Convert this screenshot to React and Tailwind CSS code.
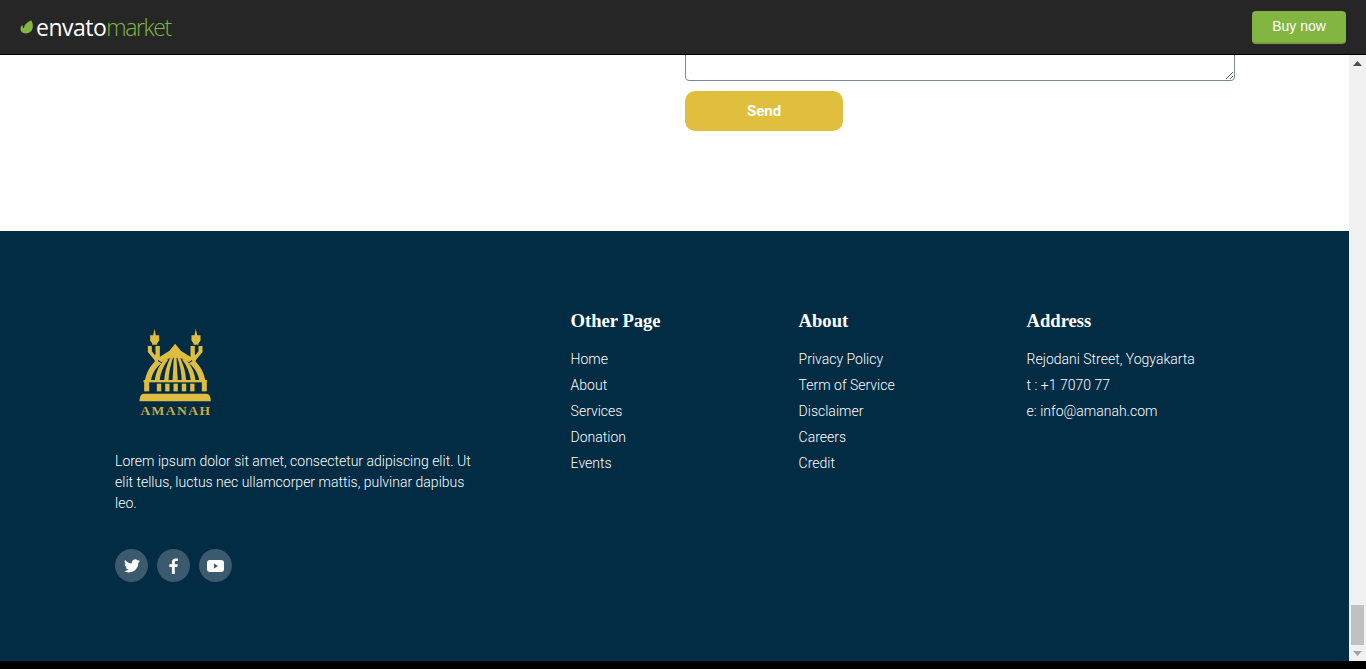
import React from "react";

function Mosque() {
  const c = "#dfbd40";
  return (
    <svg width="73" height="74" viewBox="88 38 216 222" className="block">
      <g fill={c}>
        {/* left minaret */}
        <path d="M133 40 L137 60 L147 60 L147 76 L141 84 L141 88 L126 88 L126 84 L120 76 L120 60 L129 60 Z" />
        <path d="M113 92 L125 92 L125 108 L133 118 L136 118 L136 92 L149 92 L149 130 L138 142 L128 128 L113 110 Z" />
        {/* right minaret */}
        <path d="M257 40 L261 60 L271 60 L271 76 L265 84 L265 88 L250 88 L250 84 L244 76 L244 60 L253 60 Z" />
        <path d="M277 92 L265 92 L265 108 L257 118 L254 118 L254 92 L241 92 L241 130 L252 142 L262 128 L277 110 Z" />
        {/* roof */}
        <path d="M195 85 L212 106 L250 130 L236 141 C224 131 210 127 195 127 C180 127 166 131 154 141 L140 130 L178 106 Z" />
        {/* outer dome */}
        <path d="M138 134 C120 152 108 172 104 197 L122 197 C126 174 138 156 154 144 Z" />
        <path d="M252 134 C270 152 282 172 286 197 L268 197 C264 174 252 156 236 144 Z" />
        {/* ribs */}
        <path d="M164 132 C146 150 136 172 134 197 L148 197 C151 172 160 150 175 132 Z" />
        <path d="M226 132 C244 150 254 172 256 197 L242 197 C239 172 230 150 215 132 Z" />
        <path d="M180 128 C170 148 163 172 162 197 L175 197 C176 172 181 150 188 128 Z" />
        <path d="M210 128 C220 148 227 172 228 197 L215 197 C214 172 209 150 202 128 Z" />
        <path d="M191 126 L199 126 L203 197 L187 197 Z" />
        {/* drum */}
        <rect x="100" y="194" width="190" height="7" />
        <rect x="102" y="194" width="15" height="34" />
        <rect x="275" y="194" width="15" height="34" />
        <rect x="140" y="205" width="13" height="23" />
        <rect x="165" y="205" width="13" height="23" />
        <rect x="190" y="205" width="13" height="23" />
        <rect x="215" y="205" width="13" height="23" />
        <rect x="240" y="205" width="13" height="23" />
        {/* base */}
        <path d="M100 235 L290 235 C298 235 302 246 302 258 L88 258 C88 246 92 235 100 235 Z" />
      </g>
    </svg>
  );
}

function Leaf() {
  return (
    <svg width="14" height="14" viewBox="0 0 14 14" className="block">
      <path d="M11.500 0.500 C13.500 4.500 13.500 9 10.500 11.800 C8 14 3.500 14.200 1.500 11.800 C-0.300 9.500 0.300 6.500 2.600 5 C2.500 6.500 3 7.800 3.800 8.400 C4 5 7 1.800 11.500 0.500 Z" fill="#82b541" />
    </svg>
  );
}

function Twitter() {
  return (
    <svg width="16" height="14" viewBox="0 0 24 20" fill="#fff">
      <path d="M24 2.400c-.9.400-1.800.7-2.800.8 1-.6 1.800-1.600 2.200-2.700-1 .6-2 1-3.100 1.200A4.900 4.900 0 0 0 11.900 6.200C7.800 6 4.200 4 1.700.9a4.900 4.900 0 0 0 1.500 6.600c-.8 0-1.600-.2-2.200-.6v.1c0 2.400 1.700 4.400 3.900 4.800-.7.200-1.500.2-2.200.1.600 2 2.400 3.400 4.600 3.400A9.900 9.900 0 0 1 0 17.400 13.900 13.900 0 0 0 7.500 19.600c9.100 0 14-7.500 14-14v-.6c1-.7 1.800-1.600 2.500-2.600z" />
    </svg>
  );
}

function Facebook() {
  return (
    <svg width="9" height="16" viewBox="0 0 9 16" fill="#fff">
      <path d="M5.800 16V9h2.500L8.700 6.200H5.800V4.500c0-.8.300-1.400 1.400-1.400h1.600V.6C8.500.5 7.600.4 6.600.4 4.400.4 2.900 1.700 2.900 4.200v2H.3V9h2.600v7z" />
    </svg>
  );
}

function Youtube() {
  return (
    <svg width="17" height="12" viewBox="0 0 17 12">
      <rect x="0" y="0" width="17" height="12" rx="3" fill="#fff" />
      <path d="M7 3.500 L11 6 L7 8.500 Z" fill="#3c5a6e" />
    </svg>
  );
}

function Column({ title, items }) {
  return (
    <div className="w-[228px] shrink-0">
      <h4 className="text-[18.6px] leading-[25px] font-bold text-white mb-[13px] font-['Liberation_Serif',serif]">{title}</h4>
      <ul className="flex flex-col">
        {items.map((t) => (
          <li key={t} className="text-[14px] leading-[26px] font-light text-white">{t}</li>
        ))}
      </ul>
    </div>
  );
}

function Social({ children }) {
  return (
    <div className="w-[33px] h-[33px] rounded-full bg-[#3c5a6e] flex items-center justify-center">{children}</div>
  );
}

export default function App() {
  return (
    <div className="w-[1366px] h-[669px] overflow-hidden flex flex-col bg-black font-['Roboto',sans-serif]">
      <header className="h-[55px] shrink-0 bg-[#262626] border-b border-black flex items-center justify-between pl-[20px] pr-[20px]">
        <div className="flex items-center">
          <Leaf />
          <span className="ml-[2px] text-[23px] leading-none tracking-[-0.5px] text-white font-['Open_Sans',sans-serif] font-normal">envato</span>
          <span className="text-[23px] leading-none tracking-[-1.4px] text-[#82b541] font-['Open_Sans',sans-serif] font-light">market</span>
        </div>
        <div className="w-[94px] h-[33px] rounded-[4px] bg-[#82b541] border-b-2 border-[#75a33a] flex items-center justify-center text-[14px] text-white font-['Liberation_Sans',sans-serif]">
          Buy now
        </div>
      </header>

      <div className="h-[606px] flex shrink-0">
        <main className="flex-1 flex flex-col min-w-0">
          <section className="h-[176px] shrink-0 bg-white overflow-hidden pl-[685px]">
            <textarea
              readOnly
              className="block w-[550px] h-[46px] -mt-[20px] bg-white border border-[#7b8a94] rounded-[4px] outline-none"
            />
            <button className="block mt-[10px] w-[158px] h-[40px] rounded-[10px] bg-[#e0bf3f] text-white text-[15px] font-bold leading-[40px] text-center">
              Send
            </button>
          </section>

          <footer className="h-[430px] shrink-0 bg-[#022b44] pl-[115px] pt-[77px] flex">
            <div className="w-[455.6px] shrink-0">
              <div className="pl-[24px] pt-[20px]">
                <Mosque />
                <div className="w-[74px] text-center text-[13.5px] leading-[14px] mt-[2px] font-bold tracking-[1.5px] text-[#c9ab3c] font-['Liberation_Serif',serif] whitespace-nowrap">AMANAH</div>
              </div>
              <p className="mt-[33px] w-[365px] text-[14px] leading-[21px] font-light text-white">
                Lorem ipsum dolor sit amet, consectetur adipiscing elit. Ut elit tellus, luctus nec ullamcorper mattis, pulvinar dapibus leo.
              </p>
              <div className="mt-[35px] flex gap-[9px]">
                <Social><Twitter /></Social>
                <Social><Facebook /></Social>
                <Social><Youtube /></Social>
              </div>
            </div>
            <div className="flex">
              <Column title="Other Page" items={["Home", "About", "Services", "Donation", "Events"]} />
              <Column title="About" items={["Privacy Policy", "Term of Service", "Disclaimer", "Careers", "Credit"]} />
              <Column title="Address" items={["Rejodani Street, Yogyakarta", "t : +1 7070 77", "e: info@amanah.com"]} />
            </div>
          </footer>
        </main>

        <aside className="w-[17px] shrink-0 bg-[#f1f1f1] flex flex-col items-center justify-between">
          <div className="w-[17px] h-[17px] flex items-center justify-center">
            <svg width="9" height="5" viewBox="0 0 9 5"><path d="M4.500 0 L9 5 L0 5 Z" fill="#505050" /></svg>
          </div>
          <div className="flex flex-col items-center">
            <div className="w-[13px] h-[40px] bg-[#c1c1c1]" />
            <div className="w-[17px] h-[16px] flex items-center justify-center">
              <svg width="9" height="5" viewBox="0 0 9 5"><path d="M0 0 L9 0 L4.500 5 Z" fill="#a3a3a3" /></svg>
            </div>
          </div>
        </aside>
      </div>
      <div className="flex-1 bg-black" />
    </div>
  );
}
